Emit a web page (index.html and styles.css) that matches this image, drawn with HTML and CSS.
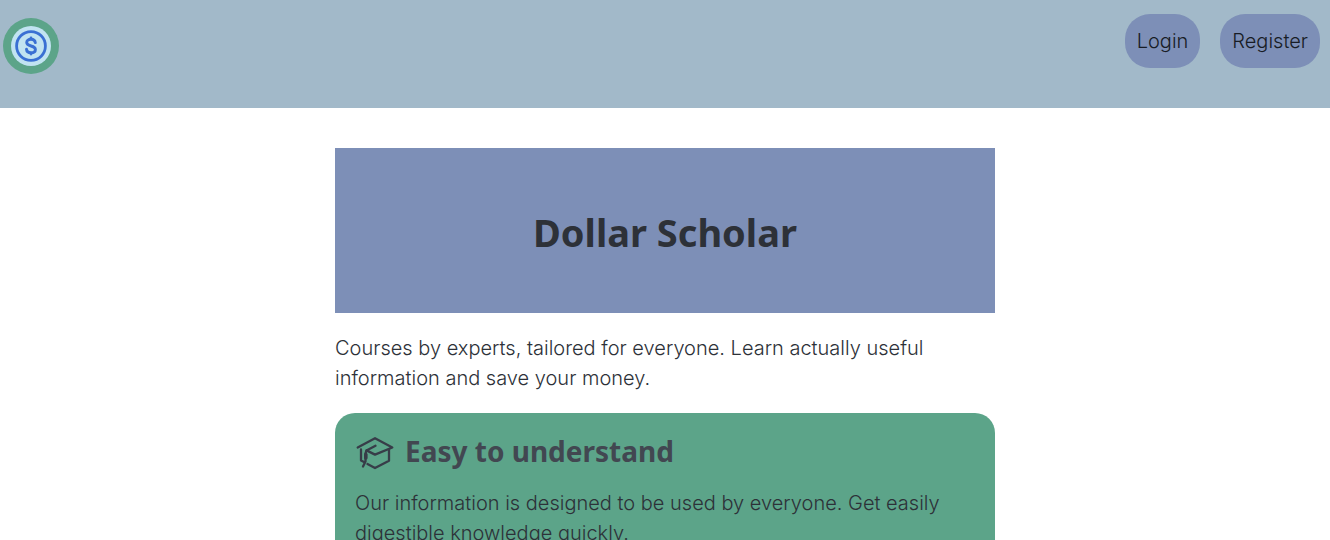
FILE: index.html
```html
<!DOCTYPE html>
<html lang="en">
<head>
  <meta charset="utf-8">
  <meta name="viewport" content="width=device-width, initial-scale=1">
  <title>Dollar Scholar</title>
  <link rel="stylesheet" href="styles.css">
</head>
<body>
  <header class="topbar">
    <a class="logo" href="#" aria-label="Home">
      <svg class="logo-mark" viewBox="0 0 40 40" aria-hidden="true">
        <circle cx="20" cy="20" r="20" fill="#c1e3f1"/>
        <circle cx="20" cy="20" r="14.400" fill="none" stroke="#3a70d3" stroke-width="2.800"/>
        <path d="M24.300 16.600c-.3-2.100-2-3.300-4.300-3.300-2.500 0-4.300 1.300-4.300 3.300 0 4.600 8.700 2.200 8.700 6.800 0 2-1.800 3.300-4.400 3.300-2.500 0-4.300-1.200-4.500-3.400M20 12v1.400M20 26.700V28" fill="none" stroke="#3a70d3" stroke-width="2.900" stroke-linecap="round" stroke-linejoin="round"/>
      </svg>
    </a>
    <nav class="account">
      <a class="pill" href="#">Login</a>
      <a class="pill" href="#">Register</a>
    </nav>
  </header>
  <main class="content">
    <div class="banner">
      <h1 class="title">Dollar Scholar</h1>
    </div>
    <p class="text">Courses by experts, tailored for everyone. Learn actually useful information and save your money.</p>
    <section class="card">
      <h2 class="card-title">
        <svg class="cap" viewBox="0 0 40 40" aria-hidden="true">
          <g fill="none" stroke="#373c48" stroke-width="2.300" stroke-linecap="round" stroke-linejoin="round">
            <path d="M2.700 16.500 20 7.200l17.300 9.300L20 23.600l-8.500-4.200 9-4.600"/>
            <path d="M34 18.300v11.400L20 37l-7.500-4M6 18.500v11l3 1.500M11.500 19.400l-1 3v8L8 35.500"/>
            <path d="M10.800 23.500v3.500" stroke-width="3.600"/>
          </g>
        </svg>
        Easy to understand
      </h2>
      <p class="text card-text">Our information is designed to be used by everyone. Get easily digestible knowledge quickly.</p>
    </section>
  </main>
</body>
</html>
```

FILE: styles.css
```css
* {
  box-sizing: border-box;
}

body {
  margin: 0;
  background: #fff;
  color: #2d3138;
  font-family: Inter, "Liberation Sans", sans-serif;
  font-size: 20px;
  font-weight: 300;
  line-height: 30px;
}

.topbar {
  display: flex;
  justify-content: space-between;
  align-items: flex-start;
  padding: 14px 10px 34px 3px;
  background: #a2b9c9;
}

.logo {
  display: flex;
  margin-top: 4px;
  padding: 8px;
  border-radius: 50%;
  background: #5ca489;
}

.logo-mark {
  width: 40px;
  height: 40px;
}

.account {
  display: flex;
  gap: 20px;
  margin-bottom: 6px;
}

.pill {
  padding: 12px;
  border-radius: 25px;
  background: #7d8fb7;
  color: #181c25;
  text-decoration: none;
}

.content {
  max-width: 700px;
  margin: 0 auto;
  padding: 40px 20px;
}

.banner {
  padding: 62px 20px 58px;
  background: #7d8fb7;
  text-align: center;
}

.title,
.card-title {
  margin: 0;
  font-family: "Noto Sans", "Open Sans", sans-serif;
  font-weight: 700;
}

.title {
  color: #2d3138;
  font-size: 38px;
  line-height: 45px;
}

.text {
  margin: 20px 0;
}

.card {
  padding: 18px 20px 20px;
  border-radius: 20px;
  background: #5ca489;
}

.card-title {
  display: flex;
  align-items: center;
  gap: 10px;
  color: #424751;
  font-size: 28px;
  line-height: 36px;
}

.cap {
  width: 40px;
  height: 40px;
}

.card-text {
  margin: 17px 0 0;
}
```
